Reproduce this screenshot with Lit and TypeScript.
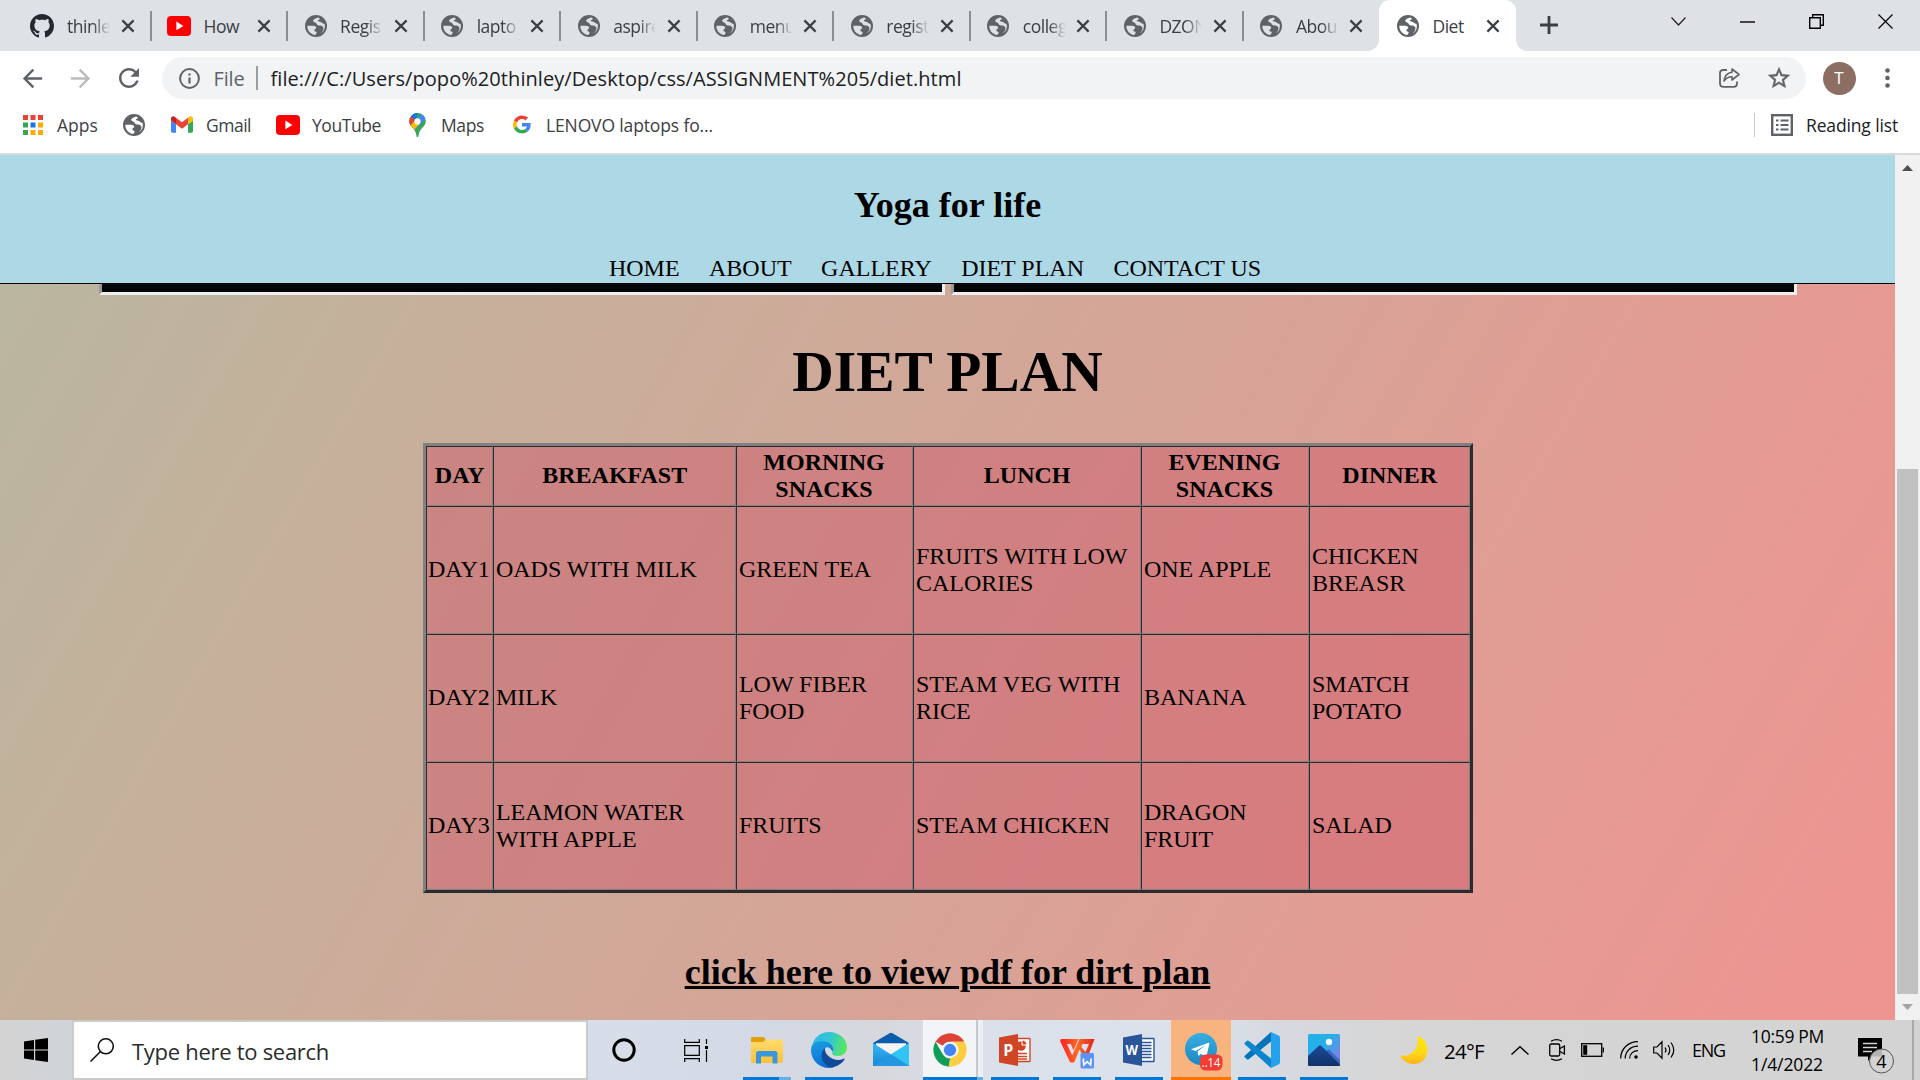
import { LitElement, html, svg, css } from "lit";
import { customElement, property } from "lit/decorators.js";

/** Text that spaces its letters so that it spans a given width. */
@customElement("fit-text")
class FitText extends LitElement {
  @property({ type: Number }) width = 0;
  @property() text = "";
  static styles = css`
    :host { display: block; white-space: pre; flex: none; }
    .run { display: inline-block; }
  `;
  firstUpdated() {
    const run = this.renderRoot.querySelector(".run") as HTMLElement;
    const natural = run.getBoundingClientRect().width;
    run.style.letterSpacing = `${(this.width - natural) / this.text.length}px`;
  }
  render() {
    return html`<span class="run">${this.text}</span>`;
  }
}

const icon = (w: number, h: number, box: string, body: unknown) =>
  html`<svg width=${w} height=${h} viewBox=${box} fill="none">${body}</svg>`;

const globe = icon(22, 22, "0 0 22 22", svg`
  <circle cx="11" cy="11" r="11" fill="#5f6368"/>
  <path d="M2.4 10.8 C6 10.6 10.6 10.3 11.2 12.4 C11.6 13.8 9.2 13.9 9.3 15.4 C9.4 16.6 11.8 16.2 11.7 17.6 C11.6 18.6 10.6 19 10.5 20 C5.6 19.6 2 15.4 2.4 10.8Z" fill="#dee1e6" class="gap"/>
  <path d="M13.400 2.4 C10.6 3.4 8 4.2 8.2 6 C8.3 7.500 10.800 7.100 11.4 8.400 C12 9.9 13.4 10.7 15.4 10.5 C17 10.4 17.4 11.8 18.4 12.3 C18.6 14.6 18 16.6 15.8 18.6 C19.2 16.4 20.4 12.8 19.6 9 C18.6 8.6 17.6 8.8 17 7.8 C16.2 6.6 14.4 6.6 13.2 6.2 C12 5.6 13.6 4.8 14.6 4.4 C15.2 3.8 14.400 3 13.400 2.4Z" fill="#dee1e6" class="gap"/>`);

const youtube = icon(24, 20, "0 0 24 20", svg`
  <rect width="24" height="20" rx="4" fill="#f00"/><path d="M9.4 5.6 L16.4 10 L9.4 14.2Z" fill="#fff"/>`);

const github = icon(24, 24, "0 0 16 16", svg`
  <path fill="#24292f" d="M8 0C3.58 0 0 3.58 0 8c0 3.54 2.29 6.53 5.47 7.59.4.07.55-.17.55-.38 0-.19-.01-.82-.01-1.49-2.01.37-2.53-.49-2.69-.94-.09-.23-.48-.94-.82-1.13-.28-.15-.68-.52-.01-.53.63-.01 1.08.58 1.23.82.72 1.21 1.87.87 2.33.66.07-.52.28-.87.51-1.07-1.78-.2-3.64-.89-3.64-3.95 0-.87.31-1.59.82-2.15-.08-.2-.36-1.02.08-2.12 0 0 .67-.21 2.2.82.64-.18 1.32-.27 2-.27s1.36.09 2 .27c1.53-1.04 2.2-.82 2.2-.82.44 1.1.16 1.92.08 2.12.51.56.82 1.27.82 2.15 0 3.07-1.87 3.75-3.65 3.95.29.25.54.73.54 1.48 0 1.07-.01 1.93-.01 2.2 0 .21.15.46.55.38A8.01 8.01 0 0 0 16 8c0-4.42-3.58-8-8-8z"/>`);

const cross = icon(14, 14, "0 0 14 14", svg`<path d="M1.4 1.4 L12.6 12.6 M12.6 1.4 L1.4 12.6" stroke="#3c4043" stroke-width="2.2"/>`);

const tabs: [unknown, string][] = [
  [github, "thinle"], [youtube, "How"], [globe, "Regis"], [globe, "lapto"], [globe, "aspire"],
  [globe, "menu"], [globe, "regist"], [globe, "colleg"], [globe, "DZON"], [globe, "About"], [globe, "Diet"],
];

const dots = ["#ea4335", "#ea4335", "#ea4335", "#34a853", "#1a73e8", "#fbab05", "#34a853", "#fbab05", "#fbab05"];
const appsGrid = icon(20, 20, "0 0 20 20",
  dots.map((c, i) => svg`<rect x=${(i % 3) * 7.5} y=${Math.floor(i / 3) * 7.5} width="5" height="5" fill=${c}/>`));

const gmail = icon(22, 17, "52 42 88 66", svg`
  <path fill="#4285f4" d="M58 108h14V74L52 59v43c0 3.32 2.69 6 6 6"/>
  <path fill="#34a853" d="M120 108h14c3.32 0 6-2.69 6-6V59l-20 15"/>
  <path fill="#fbbc04" d="M120 48v26l20-15v-8c0-7.42-8.47-11.65-14.4-7.2"/>
  <path fill="#ea4335" d="M72 74V48l24 18 24-18v26L96 92"/>
  <path fill="#c5221f" d="M52 51v8l20 15V48l-5.6-4.2c-5.94-4.45-14.4-.22-14.4 7.2"/>`);

const maps = icon(17, 24, "0 0 17 24", svg`
  <defs><clipPath id="pin"><path d="M8.5 0 A8.3 8.3 0 0 0 .2 8.4 C.2 13.2 6.8 15.6 7.4 22.4 C7.6 24.4 9.4 24.4 9.6 22.4 C10.2 15.6 16.8 13.2 16.8 8.4 A8.3 8.3 0 0 0 8.5 0Z"/></clipPath></defs>
  <g clip-path="url(#pin)"><rect width="17" height="24" fill="#34a853"/>
  <path d="M-2 16 L17 -4 L20 2 L5 18Z" fill="#4285f4"/>
  <path d="M0 0 L9 0 L6 8 L0 6Z" fill="#1a73e8"/>
  <path d="M0 3 L6.5 6.5 L1 13 L-1 13Z" fill="#ea4335"/>
  <path d="M1.2 13 L6 7.6 L11 10.5 L4.6 17.6Z" fill="#fbbc04"/></g>
  <circle cx="8.5" cy="8.4" r="3.1" fill="#fff"/>`);

const google = icon(18, 19, "0 0 48 48", svg`
  <path fill="#EA4335" d="M24 9.5c3.54 0 6.71 1.22 9.21 3.6l6.85-6.85C35.9 2.38 30.47 0 24 0 14.62 0 6.51 5.38 2.56 13.22l7.98 6.19C12.43 13.72 17.74 9.5 24 9.5z"/>
  <path fill="#4285F4" d="M46.98 24.55c0-1.57-.15-3.09-.38-4.55H24v9.02h12.94c-.58 2.96-2.26 5.48-4.78 7.18l7.73 6c4.51-4.18 7.09-10.36 7.09-17.65z"/>
  <path fill="#FBBC05" d="M10.53 28.59c-.48-1.45-.76-2.99-.76-4.59s.27-3.14.76-4.59l-7.98-6.19C.92 16.46 0 20.12 0 24c0 3.88.92 7.54 2.56 10.78l7.97-6.19z"/>
  <path fill="#34A853" d="M24 48c6.48 0 11.93-2.13 15.89-5.81l-7.73-6c-2.15 1.45-4.92 2.3-8.16 2.3-6.26 0-11.57-4.22-13.47-9.91l-7.98 6.19C6.51 42.62 14.62 48 24 48z"/>`);

const explorer = icon(36, 36, "0 0 36 36", svg`
  <defs><linearGradient id="fold" x1="0" y1="0" x2="0" y2="1"><stop stop-color="#ffdb6e"/><stop offset="1" stop-color="#fcc238"/></linearGradient></defs>
  <path d="M2 6 q0 -1 1 -1 h11 q1 0 1.6 1 l1 2 v6 h-14.600z" fill="#e3a008"/>
  <path d="M2 10 h12 l3 -2.500 h15.500 q1.500 0 1.500 1.500 v20 q0 2 -2 2 h-28 q-2 0 -2 -2z" fill="url(#fold)"/>
  <path d="M7 31.500 v-10 q0 -2.500 2.500 -2.500 h16.500 q2.500 0 2.500 2.500 v10 h-5 v-7 h-11.500 v7z" fill="#3a96dd"/>`);

const edge = icon(36, 36, "0 0 36 36", svg`
  <defs>
    <linearGradient id="eg" x1="0" y1="0.300" x2="1" y2="0.500"><stop stop-color="#2fb8e8"/><stop offset=".5" stop-color="#31c7cf"/><stop offset="1" stop-color="#5be85a"/></linearGradient>
    <linearGradient id="eb" x1="0" y1="0" x2=".3" y2="1"><stop stop-color="#1ba1e4"/><stop offset="1" stop-color="#0a70d4"/></linearGradient>
  </defs>
  <path d="M1 14 C3 5 10 0 18 0 C28 0 36 7 36 15 C36 21 32 24 27 24 C23 24 21 22.800 21 21.700 C21 20.800 22.500 20 22.500 17.500 C22.500 13 18 9.500 12 9.500 C7 9.500 3 11.500 1 14Z" fill="url(#eg)"/>
  <path d="M0 18 C0 12 5 9 11 9 C18 9 22.500 13 22.500 17.500 L21.400 20 C20 16 16.500 14 14 16 C10 19 12 29 22 35.500 C20 36 18 36 18 36 C8 36 0 28 0 18Z" fill="url(#eb)"/>
  <path d="M14.300 15.700 C11 18 9 24 12 29 C15 34 20 36.500 23 35 C27.500 33.800 31.500 31 33.500 27.500 C34 26.700 33.500 26.200 32.600 26.700 C28 29 22 28 18 24.500 C15 22 13.300 18.500 14.300 15.700Z" fill="#114a97"/>`);

const mail = icon(36, 36, "0 0 36 36", svg`
  <defs><linearGradient id="ml" x1="0" y1="0" x2="0" y2="1"><stop stop-color="#35b8f1"/><stop offset="1" stop-color="#1a86d8"/></linearGradient></defs>
  <path d="M0 11 L16.500 1.300 q1.500 -.9 3 0 L36 11 V14 H0Z" fill="#0b5cab"/>
  <path d="M3 11.300 H33 V20 L18 26 L3 18Z" fill="#f4f4f4"/>
  <path d="M0 11 L18 22.500 L36 11 V34 H0Z" fill="url(#ml)"/>
  <path d="M18 22.500 L36 11 V34Z" fill="#32c5f4"/>
  <path d="M18 22.500 L36 34 H0Z" fill="#2497e0"/>`);

const chrome = icon(34, 34, "0 0 48 48", svg`
  <circle cx="24" cy="24" r="23.500" fill="#fff"/>
  <path d="M3.650 12.250 A23.500 23.500 0 0 1 44.350 12.250 L24 12.250 A11.750 11.750 0 0 0 13.820 18.120Z" fill="#db4437"/>
  <path d="M3.650 12.250 L13.820 29.870 A11.750 11.750 0 0 0 24 35.750 L24 47.500 A23.500 23.500 0 0 1 3.650 12.250Z" fill="#0f9d58"/>
  <path d="M44.350 12.250 A23.500 23.500 0 0 1 24 47.500 L34.180 29.870 A11.750 11.750 0 0 0 24 12.250Z" fill="#ffcd40"/>
  <path d="M24 47.500 L34.180 29.870 L24 35.750 L22 47.400Z" fill="#ffcd40"/>
  <circle cx="24" cy="24" r="10.800" fill="#f1f1f1"/><circle cx="24" cy="24" r="8.700" fill="#4285f4"/>`);

const powerpoint = icon(32, 32, "0 0 32 32", svg`
  <rect x="17" y="4.500" width="14" height="23" rx=".6" fill="#fff" stroke="#d24625" stroke-width="1.400"/>
  <circle cx="22" cy="12" r="4.800" fill="#d24625"/><path d="M23 6 v5 h5 a5 5 0 0 0 -5 -5z" fill="#d24625" stroke="#fff"/>
  <path d="M19 19.500h9M19 22.500h9M19 25h9" stroke="#d24625" stroke-width="1.300"/>
  <path d="M0 3.500 L19 0 V32 L0 28.500Z" fill="#cf4626"/>
  <text x="4.200" y="21.800" class="mark" font-size="16" font-weight="700" fill="#fff">P</text>`);

const word = icon(32, 32, "0 0 32 32", svg`
  <rect x="17" y="4.500" width="14" height="23" rx=".6" fill="#fff" stroke="#2a5699" stroke-width="1.400"/>
  <path d="M19 8.500h9.500M19 11.500h9.500M19 14.500h9.500M19 17.500h9.500M19 20.500h9.500M19 23.500h9.500" stroke="#2a5699" stroke-width="1.400"/>
  <path d="M0 3.500 L19 0 V32 L0 28.500Z" fill="#2a5699"/>
  <text x="2.600" y="21" class="mark" font-size="14" font-weight="700" fill="#fff" textLength="12.500" lengthAdjust="spacingAndGlyphs">W</text>`);

const wps = icon(36, 36, "0 0 36 36", svg`
  <defs><linearGradient id="wp" x1="0" y1="0" x2="1" y2="0"><stop stop-color="#ff1f1f"/><stop offset=".5" stop-color="#ff6a2a"/><stop offset="1" stop-color="#e0241a"/></linearGradient></defs>
  <path d="M2.500 7 H19.500 L14.500 18.500 L11.800 12 H8 L13.200 23.500 L20.500 7 H35.500 L28 27 L22.500 21 L20.500 17.500 L15.200 30.500 H11.200 L1.300 9.500 Q.8 7 2.500 7ZM23.500 12 L22.300 15 L26.500 20 L30 12Z" fill="url(#wp)" fill-rule="evenodd"/>
  <rect x="21.500" y="21" width="13.500" height="15.500" rx="1.500" fill="#5b93f5"/>
  <path d="M24.300 26.500 L24.800 33 L28.200 29.700 L31.600 33 L32.100 26.500" stroke="#fff" stroke-width="1.700"/>`);

const telegram = icon(38, 40, "0 0 38 40", svg`
  <defs><linearGradient id="tg" x1="0" y1="0" x2="0" y2="1"><stop stop-color="#37aee2"/><stop offset="1" stop-color="#1e88bf"/></linearGradient></defs>
  <circle cx="16" cy="18" r="16" fill="url(#tg)"/>
  <path d="M6 18.300 L23.500 11.800 Q24.700 11.500 24.300 13 L21.600 25 Q21.300 26.300 20 25.500 L16 22.700 L13.900 24.800 L13 24 L12.700 20.500 L21 13.800 L10.800 20Z" fill="#fff"/>
  <rect x="15" y="23.500" width="22.500" height="16" rx="5.500" fill="#f23c34"/>
  <text x="16.800" y="36.100" class="mark" font-size="13" fill="#fff" textLength="18.500" lengthAdjust="spacingAndGlyphs">..14</text>`);

const vscode = icon(36, 36, "0 0 36 36", svg`
  <path d="M1 23.500 L27 0 V9.500 L5 27 Q3.700 28 2.600 27 L.7 25.300 Q-.2 24.300 1 23.500Z" fill="#0473b8"/>
  <path d="M1 12.500 L27 36 V26.500 L5 9 Q3.700 8 2.600 9 L.7 10.700 Q-.2 11.700 1 12.500Z" fill="#0b86ce"/>
  <path d="M27 0 L34.500 3.400 Q36 4.200 36 6 V30 Q36 31.800 34.500 32.600 L27 36Z" fill="#24a2ee"/>`);

const photos = icon(32, 32, "0 0 32 32", svg`
  <defs>
    <linearGradient id="ps" x1="0" y1="0" x2="1" y2=".8"><stop offset=".5" stop-color="#25b0ea"/><stop offset="1" stop-color="#8f7ae0"/></linearGradient>
    <linearGradient id="pm" x1="0" y1="0" x2="0" y2="1"><stop stop-color="#1d4a9a"/><stop offset="1" stop-color="#0f3268"/></linearGradient>
    <clipPath id="pc"><rect width="32" height="32" rx="1.500"/></clipPath></defs>
  <g clip-path="url(#pc)"><rect width="32" height="32" fill="url(#ps)"/>
  <path d="M14 24 L19.600 16 Q20.600 15 21.600 16 L32 26 V32 H14Z" fill="#3d68c8"/>
  <path d="M0 22 L10.500 12 Q12 10.700 13.500 12 L32 30.500 V32 H0Z" fill="url(#pm)"/>
  <circle cx="21" cy="8" r="3.200" fill="#f5f5f5"/></g>`);

const apps: [string, unknown][] = [
  ["multi", explorer], ["run", edge], ["idle", mail], ["active", chrome], ["run", powerpoint],
  ["run", wps], ["run", word], ["alert", telegram], ["run late", vscode], ["run late", photos],
];

const columns = ["DAY", "BREAKFAST", "MORNING SNACKS", "LUNCH", "EVENING SNACKS", "DINNER"];
const days = [
  ["DAY1", "OADS WITH MILK", "GREEN TEA", "FRUITS WITH LOW CALORIES", "ONE APPLE", "CHICKEN BREASR"],
  ["DAY2", "MILK", "LOW FIBER FOOD", "STEAM VEG WITH RICE", "BANANA", "SMATCH POTATO"],
  ["DAY3", "LEAMON WATER WITH APPLE", "FRUITS", "STEAM CHICKEN", "DRAGON FRUIT", "SALAD"],
];

@customElement("app-root")
class AppRoot extends LitElement {
  static styles = css`
    :host { display: flex; flex-direction: column; width: 1920px; height: 1080px; overflow: hidden; background: #fff;
      font-family: "Open Sans", "Noto Sans", sans-serif; font-size: 17.500px; color: #3c4043; }
    * { box-sizing: border-box; }
    svg { display: block; flex: none; overflow: visible; }
    .mark { font-family: "Open Sans", sans-serif; }

    .strip { display: flex; height: 51px; flex: none; background: #dee1e6; padding-left: 14px; }
    .tab { display: flex; align-items: center; width: 136.550px; flex: none; padding-left: 16px; position: relative; }
    .tab::after { content: ""; position: absolute; right: -1px; top: 11px; width: 2px; height: 30px; background: #8a8d92; }
    .tab:nth-child(10)::after { display: none; }
    .fav { width: 24px; display: flex; justify-content: center; padding-left: 1px; }
    .tab:first-child .fav { padding-left: 0; }
    .title { width: 43px; margin: 0 12px 0 13px; overflow: hidden; white-space: nowrap; letter-spacing: -0.500px; line-height: 30px;
      -webkit-mask-image: linear-gradient(90deg, #000 60%, transparent); mask-image: linear-gradient(90deg, #000 60%, transparent); }
    .short .title { -webkit-mask-image: none; mask-image: none; }
    .tab > svg { margin-left: -1.500px; }
    .tab.on { background: #fff; border-radius: 11px 11px 0 0; z-index: 1; }
    .tab.on .gap { fill: #fff; }
    .tab.on::after, .tab.on::before { content: ""; position: absolute; top: auto; bottom: 0; width: 11px; height: 11px; }
    .tab.on::before { left: -11px; background: radial-gradient(circle at 0 0, transparent 10.500px, #fff 11px); }
    .tab.on::after { right: -11px; background: radial-gradient(circle at 100% 0, transparent 10.500px, #fff 11px); }
    .plus { margin: 16px 0 0 24px; }
    .caption { display: flex; margin-left: auto; width: 276px; height: 43px; }
    .caption > span { width: 69px; display: flex; align-items: center; justify-content: center; }

    .toolbar { display: flex; align-items: center; height: 54px; flex: none; padding-left: 20px; }
    .nav { width: 28px; margin-right: 20.500px; display: flex; justify-content: center; }
    .nav.first { margin-left: -2px; }
    .omni { display: flex; align-items: center; width: 1644px; height: 42px; border-radius: 21px; background: #f1f3f4; padding-left: 17px;
      margin-left: -2px; font-size: 20px; color: #202124; }
    .scheme { color: #5f6368; margin-left: 14px; }
    .bar { width: 2px; height: 24px; background: #9a9da1; margin: 0 13px 0 11px; }
    .share { margin-left: auto; margin-right: 25px; }
    .star { margin-right: 14px; }
    .share svg { margin-right: 1px; margin-left: 1px; }
    .avatar { width: 33px; height: 33px; border-radius: 50%; background: #8d6e63; color: #fff; font-size: 17px; line-height: 32px;
      text-align: center; margin-left: 17px; }
    .kebab { margin-left: 29px; }

    .marks { display: flex; align-items: center; height: 50px; flex: none; padding: 0 0 9px 23px; border-bottom: 2px solid #d9dadb; }
    .marks .gap { fill: #fff; }
    .list { display: flex; align-items: center; gap: 13px; margin-left: auto; padding-left: 16px; margin-right: 22px; height: 24px;
      border-left: 1px solid #c8cace; color: #202124; }

    .view { display: flex; height: 865px; flex: none; }
    .page { width: 1895px; display: flex; flex-direction: column; align-items: center; color: #000;
      font-family: "Liberation Serif", "Times New Roman", serif;
      background: linear-gradient(120deg, #b8b79f, #c7af9b 25%, #d6a497 55%, #e59b93 80%, #ef9491); }
    header { width: 100%; height: 129px; flex: none; background: #add8e6; border-bottom: 1px solid #000; display: flex;
      flex-direction: column; align-items: center; padding-top: 30px; }
    h2 { font-size: 36px; line-height: 41px; margin: 0; font-weight: 700; }
    nav { display: flex; gap: 29.400px; font-size: 24px; line-height: 27px; margin: 29px 25px 0 0; }
    .pictures { display: flex; gap: 6px; height: 11px; flex: none; margin-left: 1px; }
    .picture { width: 846px; height: 11px; background: linear-gradient(#060b0c, #000); border: 3px solid; border-top: 0;
      border-color: #9a9a9a #eee #eee #9a9a9a; }
    h1 { font-size: 57.500px; line-height: 66px; font-weight: 700; margin: 44px 0 0; }
    table { margin-top: 38px; border: 3px solid; border-color: #808080 #2c2c2c #2c2c2c #808080; border-spacing: 0; width: 1050px;
      table-layout: fixed; font-size: 24px; line-height: 27px; flex: none; }
    th, td { border: 1px solid; border-color: #2c2c2c #808080 #808080 #2c2c2c; padding: 1px 1px 2px 2.400px; background: rgba(205, 88, 105, 0.480); }
    td:first-child { padding-left: 1.500px; padding-right: 0; }
    th { height: 60px; padding-bottom: 3px; }
    td { height: 128px; text-align: left; }
    .c0 { width: 67px; } .c1 { width: 243px; } .c2 { width: 177px; } .c3 { width: 228px; } .c4 { width: 168px; } .c5 { width: 161px; }
    th.c2, th.c4 { padding: 0 20px 1px; }
    .pdf { font-size: 36px; line-height: 41px; font-weight: 700; margin-top: 59px; text-decoration: underline; text-decoration-thickness: 3px; }

    .scroll { width: 25px; background: #f1f1f1; display: flex; flex-direction: column; align-items: center; }
    .scroll svg { margin: 10px 0; }
    .thumb { width: 21px; height: 528px; margin-top: 288px; background: #c1c1c1; }

    .task { display: flex; align-items: center; height: 60px; flex: none; color: #111;
      background: linear-gradient(90deg, #d3d3d3 0, #d0d4da 72px, #d7dee9 588px, #d3d9e5 760px, #d6d8dd 880px, #dbe1ea 1000px, #dbe2ec 1200px, #d6d9df 1280px, #d6d6d6 1400px, #d3d3d3 100%); }
    .start { width: 72px; padding-left: 24px; }
    .search { display: flex; align-items: center; width: 516px; height: 60px; border: 2px solid #cbcbcb; background: #fff; padding-left: 16px;
      gap: 18px; font-size: 22px; color: #2b2b2b; }
    .search fit-text { margin-top: 2px; }
    .tool { width: 72px; display: flex; justify-content: center; }
    .apps { display: flex; gap: 2px; margin-left: 5px; }
    .app { width: 60px; height: 60px; display: flex; align-items: center; justify-content: center; position: relative; }
    .app::after { content: ""; position: absolute; left: 6px; right: 6px; bottom: 0; height: 3px; background: #0078d7; }
    .late { padding-right: 2px; }
    .late::after { left: 5px; right: 7px; }
    .idle::after { display: none; }
    .multi::after { background: linear-gradient(90deg, #0078d7 75%, #66aee6 75%); }
    .active { background: linear-gradient(90deg, #f2f4f7 53px, #c4c9d2 53px, #c4c9d2 55px, #eceff3 55px); padding-right: 6px; }
    .active::after { left: 0; right: 0; background: linear-gradient(90deg, #0078d7 90%, #66aee6 90%); }
    .alert { background: #f8b37e; padding: 1px 0 0 5px; }
    .alert::after { left: 0; right: 0; background: #ff7300; }
    .tray { display: flex; align-items: center; margin-left: 45px; height: 60px; color: #000; }
    .temp { font-size: 20.500px; margin: 2px 0 0 16px; }
    .lang { font-size: 18px; margin-left: 16px; }
    .clock { display: flex; flex-direction: column; gap: 4px; font-size: 17.500px; line-height: 24px; margin: 0 0 0 26px; width: 72px; }
    .notes { margin: 10px 0 0 35px; }
    .peek { width: 2px; height: 60px; background: #a9a9a9; margin-left: 17px; }
  `;

  render() {
    return html`
      <div class="strip">
        ${tabs.map(([fav, name], i) => html`
          <div class="tab ${i === 10 ? "on" : ""} ${name.length < 5 && name !== "menu" && name !== "DZON" ? "short" : ""}">
            <span class="fav">${fav}</span><span class="title">${name}</span>${cross}
          </div>`)}
        <span class="plus">${icon(18, 18, "0 0 18 18", svg`<path d="M9 0V18M0 9H18" stroke="#3c4043" stroke-width="2.800"/>`)}</span>
        <div class="caption">
          <span>${icon(15, 9, "0 0 15 9", svg`<path d="M.5 .5L7.500 8L14.500 .5" stroke="#222" stroke-width="1.200"/>`)}</span>
          <span>${icon(15, 2, "0 0 15 2", svg`<path d="M0 1H15" stroke="#000" stroke-width="1.400"/>`)}</span>
          <span>${icon(15, 15, "0 0 15 15", svg`<path d="M.7 3.700H11.300V14.300H.7ZM3.700 3.700V.7H14.300V11.300H11.300" stroke="#000" stroke-width="1.400"/>`)}</span>
          <span>${icon(15, 15, "0 0 15 15", svg`<path d="M.5 .5L14.500 14.500M14.500 .5L.5 14.500" stroke="#000" stroke-width="1.200"/>`)}</span>
        </div>
      </div>

      <div class="toolbar">
        <span class="nav first">${icon(29, 29, "0 0 24 24", svg`<path d="M20 11H7.830l5.590-5.590L12 4l-8 8 8 8 1.410-1.410L7.830 13H20v-2z" fill="#5f6368"/>`)}</span>
        <span class="nav">${icon(29, 29, "0 0 24 24", svg`<path d="M4 11h12.170l-5.590-5.590L12 4l8 8-8 8-1.410-1.410L16.170 13H4v-2z" fill="#babcbe"/>`)}</span>
        <span class="nav">${icon(30, 30, "0 0 24 24", svg`<path d="M17.650 6.350C16.200 4.900 14.210 4 12 4c-4.420 0-7.990 3.580-7.990 8s3.570 8 7.990 8c3.730 0 6.840-2.550 7.730-6h-2.080c-.82 2.330-3.040 4-5.650 4-3.310 0-6-2.690-6-6s2.690-6 6-6c1.660 0 3.140.69 4.220 1.780L13 11h7V4l-2.350 2.350z" fill="#5f6368"/>`)}</span>
        <div class="omni">
          ${icon(21, 21, "0 0 21 21", svg`<circle cx="10.500" cy="10.500" r="9.400" stroke="#5f6368" stroke-width="2"/><path d="M10.500 9.500V15.500M10.500 5.500V7.600" stroke="#5f6368" stroke-width="2.200"/>`)}
          <fit-text class="scheme" width="31" text="File"></fit-text>
          <span class="bar"></span>
          <fit-text width="691" text="file:///C:/Users/popo%20thinley/Desktop/css/ASSIGNMENT%205/diet.html"></fit-text>
          <span class="share">${icon(21, 20, "0 0 21 20", svg`<path d="M8 2H4.500Q1 2 1 5V15.500Q1 18.800 4.500 18.800H14.500Q18 18.800 18 15.500V13.500" stroke="#5f6368" stroke-width="1.800"/><path d="M13 1L20 6.500L13 12V8.800C9 8.800 7 10 5 13C5.400 8.500 8 4.800 13 4.200Z" stroke="#5f6368" stroke-width="1.600" stroke-linejoin="round"/>`)}</span>
          <span class="star">${icon(26, 26, "0 0 24 24", svg`<path d="M22 9.240l-7.190-.62L12 2 9.190 8.630 2 9.240l5.460 4.730L5.820 21 12 17.270 18.180 21l-1.630-7.030L22 9.240zM12 15.400l-3.760 2.270 1-4.280-3.320-2.880 4.380-.38L12 6.100l1.710 4.040 4.380.38-3.320 2.880 1 4.280L12 15.400z" fill="#5f6368" stroke="#5f6368" stroke-width=".35"/>`)}</span>
        </div>
        <span class="avatar">T</span>
        <span class="kebab">${icon(5, 20, "0 0 5 20", svg`<circle cx="2.500" cy="2.500" r="2.300" fill="#5f6368"/><circle cx="2.500" cy="10" r="2.300" fill="#5f6368"/><circle cx="2.500" cy="17.500" r="2.300" fill="#5f6368"/>`)}</span>
      </div>

      <div class="marks">
        ${appsGrid}<fit-text style="margin-left:14px;margin-right:25px" width="41" text="Apps"></fit-text>
        ${globe}<span style="width:26px"></span>
        ${gmail}<fit-text style="margin-left:13px;margin-right:25px" width="45" text="Gmail"></fit-text>
        ${youtube}<fit-text style="margin-left:12px;margin-right:28px" width="69" text="YouTube"></fit-text>
        ${maps}<fit-text style="margin-left:15px;margin-right:29px" width="43" text="Maps"></fit-text>
        ${google}<fit-text style="margin-left:15px" width="167" text="LENOVO laptops fo..."></fit-text>
        <div class="list">
          ${icon(22, 22, "0 0 22 22", svg`<rect x="1.200" y="1.200" width="19.600" height="19.600" stroke="#5f6368" stroke-width="2.400"/><path d="M5 6.500h2.500M9.500 6.500h8M5 11h2.500M9.500 11h8M5 15.500h2.500M9.500 15.500h8" stroke="#5f6368" stroke-width="2.200"/>`)}
          <fit-text width="92" text="Reading list"></fit-text>
        </div>
      </div>

      <div class="view">
        <main class="page">
          <header>
            <h2>Yoga for life</h2>
            <nav><span>HOME</span><span>ABOUT</span><span>GALLERY</span><span>DIET PLAN</span><span>CONTACT US</span></nav>
          </header>
          <div class="pictures"><div class="picture"></div><div class="picture"></div></div>
          <h1>DIET PLAN</h1>
          <table>
            <tr>${columns.map((c, i) => html`<th class="c${i}">${c}</th>`)}</tr>
            ${days.map((row) => html`<tr>${row.map((c) => html`<td>${c}</td>`)}</tr>`)}
          </table>
          <div class="pdf">click here to view pdf for dirt plan</div>
        </main>
        <div class="scroll">
          ${icon(11, 6, "0 0 11 6", svg`<path d="M0 6L5.500 0L11 6Z" fill="#505050"/>`)}
          <div class="thumb"></div>
          ${icon(11, 6, "0 0 11 6", svg`<path d="M0 0L5.500 6L11 0Z" fill="#a3a3a3"/>`)}
        </div>
      </div>

      <div class="task">
        <div class="start">${icon(24, 24, "0 0 24 24", svg`<path d="M0 3.400L10 2V11.400H0ZM11.200 1.800L24 0V11.400H11.200ZM0 12.600H10V22L0 20.600ZM11.200 12.600H24V24L11.200 22.200Z" fill="#000"/>`)}</div>
        <div class="search">
          ${icon(24, 24, "0 0 24 24", svg`<circle cx="15.800" cy="8.300" r="7.500" stroke="#111" stroke-width="1.600"/><path d="M10.500 13.500L.5 23.500" stroke="#111" stroke-width="1.600"/>`)}
          <fit-text width="197" text="Type here to search"></fit-text>
        </div>
        <div class="tool">${icon(24, 24, "0 0 24 24", svg`<circle cx="12" cy="12" r="10.200" stroke="#000" stroke-width="3"/>`)}</div>
        <div class="tool">${icon(24, 23, "0 0 24 23", svg`<path d="M.7 0V3.300H15.300V0M.7 6.700H15.300V16.300H.7ZM.7 23V19.700H15.300V23M22.500 0V5M22.500 11V23" stroke="#000" stroke-width="1.200"/><rect x="21" y="7" width="3" height="3" fill="#000"/>`)}</div>
        <div class="apps">${apps.map(([state, glyph]) => html`<div class="app ${state}">${glyph}</div>`)}</div>
        <div class="tray">
          ${icon(28, 28, "0 0 28 28", svg`<defs><linearGradient id="mn" x1="0" y1="0" x2="0" y2="1"><stop stop-color="#ffe500"/><stop offset=".6" stop-color="#ffd91a"/><stop offset="1" stop-color="#ffb11a"/></linearGradient></defs><path d="M17.500 0C24 2 27.500 8 27.500 14C27.500 22 21.500 28 14 28C8 28 2.500 25 0 19.500C10 21.500 20 14 17.500 0Z" fill="url(#mn)"/>`)}
          <fit-text class="temp" width="40" text="24°F"></fit-text>
          <span style="margin-left:27px">${icon(18, 9, "0 0 18 9", svg`<path d="M.5 8.500L9 .8L17.500 8.500" stroke="#000" stroke-width="1.400"/>`)}</span>
          <span style="margin-left:20px">${icon(16, 22, "0 0 16 22", svg`<rect x=".7" y="5" width="10" height="12" rx="1.500" stroke="#000" stroke-width="1.300"/><path d="M11 9.500L15.400 7V15L11 12.500M2 2.200Q7.500 -.8 13 2.200M2 19.800Q7.500 22.800 13 19.800" stroke="#000" stroke-width="1.300"/>`)}</span>
          <span style="margin-left:16px">${icon(23, 14, "0 0 23 14", svg`<rect x=".7" y=".7" width="20" height="12.600" stroke="#000" stroke-width="1.300"/><rect x="2.200" y="2.200" width="4" height="9.600" fill="#000"/><path d="M22.300 4.500V9.500" stroke="#000" stroke-width="1.300"/>`)}</span>
          <span style="margin-left:16px">${icon(18, 18, "0 0 18 18", svg`<circle cx="16" cy="16" r="1.800" fill="#000"/><path d="M.7 17.500C.7 8 8 .7 18 .7M5.200 17.500C5.200 10.500 10.500 5.200 18 5.200M9.700 17.500C9.700 13 13 9.700 18 9.700" stroke="#000" stroke-width="1.200"/>`)}</span>
          <span style="margin-left:15px">${icon(23, 18, "0 0 23 18", svg`<path d="M.7 6H4L9 .8V17.200L4 12H.7ZM12 6.500Q14 9 12 11.500M15 4Q18.600 9 15 14M18 1.500Q23.600 9 18 16.500" stroke="#000" stroke-width="1.200"/>`)}</span>
          <fit-text class="lang" width="33" text="ENG"></fit-text>
          <div class="clock"><fit-text width="73" text="10:59 PM"></fit-text><fit-text width="72" text="1/4/2022"></fit-text></div>
          <span class="notes">${icon(37, 36, "0 0 37 36", svg`<path d="M0 0H24V18.500H14L10 23V18.500H0Z" transform="translate(0 1)" fill="#000"/><path d="M5 6.500H19M5 10.500H19M5 14.500H14" stroke="#d3d3d3" stroke-width="1.300"/><circle cx="23.500" cy="24" r="12" fill="#d3d3d3" fill-opacity=".85" stroke="#555"/><text x="18.300" y="30.500" class="mark" font-size="18" font-weight="500" fill="#000">4</text>`)}</span>
          <span class="peek"></span>
        </div>
      </div>
    `;
  }
}
